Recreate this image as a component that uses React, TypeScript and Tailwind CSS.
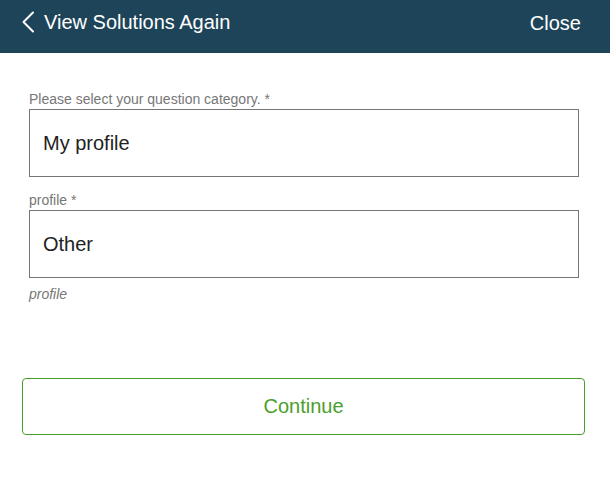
import React from "react";

export default function App() {
  return (
    <div className="w-[610px] h-[479px] bg-white" style={{ fontFamily: '"Liberation Sans", Arial, sans-serif' }}>
      <div className="h-[53px] bg-[#1e4459] flex items-center justify-between pl-[21px] pr-[29px] text-white">
        <div className="flex items-center gap-[9px] -mt-[10px]">
          <svg width="14" height="22" viewBox="0 0 14 22" fill="none">
            <path d="M12 1.5 L2.5 11 L12 20.5" stroke="white" strokeWidth="2" strokeLinecap="round" strokeLinejoin="round" />
          </svg>
          <span className="text-[20px] leading-none">View Solutions Again</span>
        </div>
        <span className="text-[20px] leading-none -mt-[8px]">Close</span>
      </div>
      <div className="pl-[29px] pr-[31px] pt-[38px]">
        <div className="text-[14px] leading-[16px] text-[#777777] mb-[2px]">Please select your question category. *</div>
        <div className="h-[68px] border border-[#767676] flex items-center px-[13px] text-[20px] text-[#222222]">My profile</div>
        <div className="text-[14px] leading-[16px] text-[#777777] mt-[15px] mb-[2px]">profile *</div>
        <div className="h-[68px] border border-[#767676] flex items-center px-[13px] text-[20px] text-[#222222]">Other</div>
        <div className="text-[14px] leading-[16px] text-[#777777] italic mt-[8px]">profile</div>
      </div>
      <div className="pl-[22px] pr-[25px] mt-[76px]">
        <button className="w-full h-[57px] border border-[#4a9e2a] rounded-[4px] text-[20px] text-[#4a9e2a] flex items-center justify-center pb-[2px]">
          Continue
        </button>
      </div>
    </div>
  );
}
